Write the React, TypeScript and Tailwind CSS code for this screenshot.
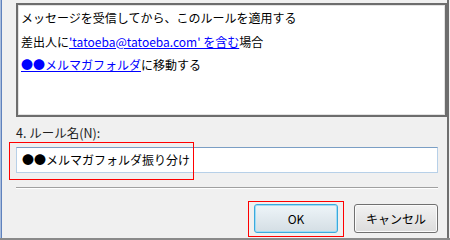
import React from "react";

export default function App() {
  const font = { fontFamily: '"Noto Sans CJK JP", "Noto Sans", sans-serif' };
  return (
    <div
      className="relative w-[450px] h-[240px] overflow-hidden bg-[#f0f0f0] text-[12px] text-black"
      style={font}
    >
      <div className="absolute left-0 top-0 h-full w-[1px] bg-[#a9bddd]" />
      <div className="absolute left-[1px] top-0 h-full w-[1px] bg-[#5f82bd]" />
      <div className="absolute right-[1px] top-0 h-full w-[2px] bg-[#6e6e6e]" />
      <div className="absolute left-0 bottom-0 w-full h-[2px] bg-[#8a8a8a]" />

      <div className="flex flex-col pl-[16px] pr-[3px] pt-[3px]">
        <div className="h-[114px] border-2 border-[#6d6d6d] bg-white shadow-[inset_0_0_0_1px_#e3e3e3] px-[3px] pt-[1px] leading-[23.5px]">
          <div>メッセージを受信してから、このルールを適用する</div>
          <div>
            差出人に
            <span className="text-[#0000ff] underline">'tatoeba@tatoeba.com' を含む</span>
            場合
          </div>
          <div>
            <span className="text-[#0000ff] underline">●●メルマガフォルダ</span>
            に移動する
          </div>
        </div>

        <div className="mr-[9px] flex flex-col">
          <div className="mt-[8px] leading-[16px] text-[12.5px] text-[#1e1e1e]">4. ルール名(N):</div>
          <div className="relative mt-[6px] h-[26px] border border-[#b7d0e8] border-t-[#7a9ec4] bg-white pl-[5px] leading-[24px]">
            ●●メルマガフォルダ振り分け
            <div className="absolute left-[-8px] top-[-6px] w-[185px] h-[38px] outline outline-1 outline-[#ff0000] outline-offset-[-1px]" />
          </div>
          <div className="mt-[14px] h-[2px] border-t border-[#a0a0a0] border-b border-b-white" />
          <div className="mt-[15px] flex justify-end gap-[16px]">
            <div className="relative">
              <button className="w-[84px] h-[29px] rounded-[3px] border border-[#3ba9dc] shadow-[inset_0_0_0_1px_#9fdcf6] bg-gradient-to-b from-[#eef5f9] to-[#d4dee4] text-[12px] leading-none" style={font}>
                OK
              </button>
              <div className="absolute left-[-6px] top-[-3px] w-[96px] h-[36px] outline outline-1 outline-[#ff0000] outline-offset-[-1px]" />
            </div>
            <button className="w-[84px] h-[29px] rounded-[3px] border border-[#707070] shadow-[inset_0_0_0_1px_#fbfbfb] bg-gradient-to-b from-[#f2f2f2] to-[#dcdcdc] text-[12px] leading-none" style={font}>
              キャンセル
            </button>
          </div>
        </div>
      </div>
    </div>
  );
}
